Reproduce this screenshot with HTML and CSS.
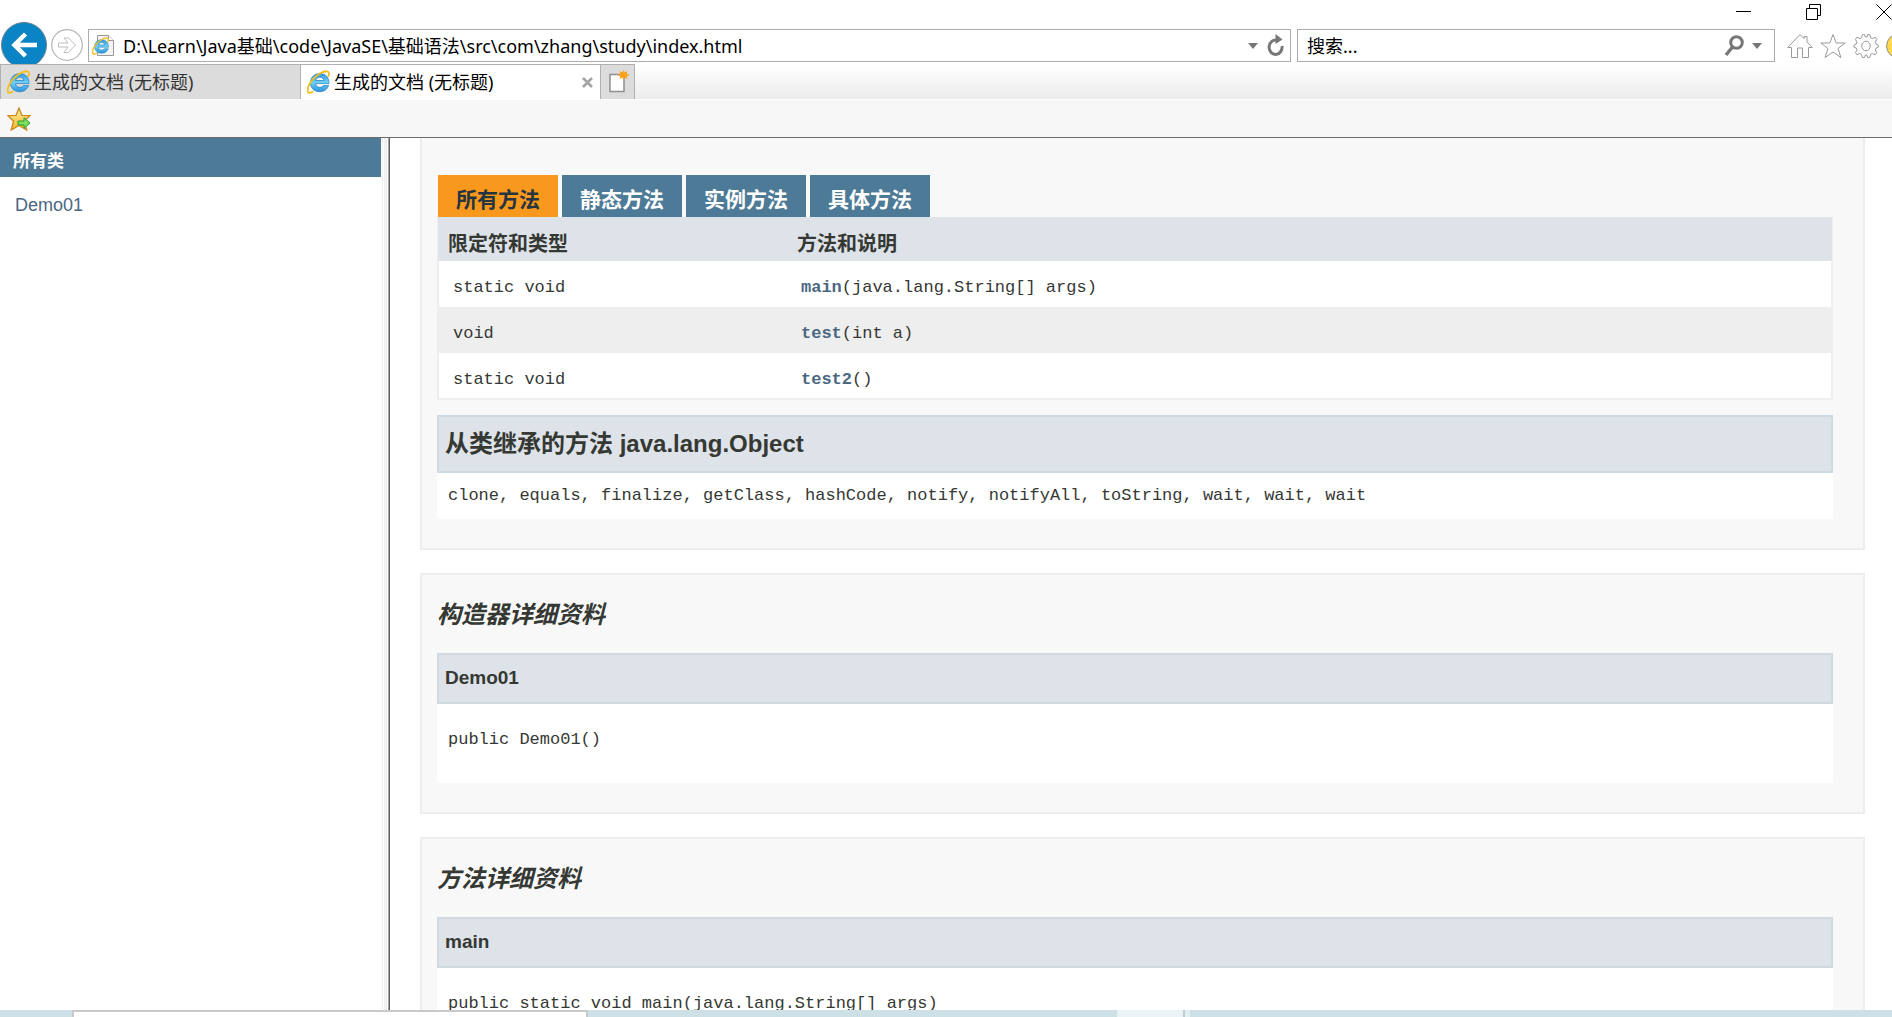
FILE: index.html
```html
<!DOCTYPE html>
<html lang="zh-CN">
<head>
<meta charset="utf-8">
<title>生成的文档 (无标题)</title>
<link rel="stylesheet" href="styles.css">
</head>
<body>
<svg class="defs" aria-hidden="true">
  <defs>
    <linearGradient id="blue" x1="0" y1="0" x2="0" y2="1"><stop offset="0" stop-color="#2f9be0"/><stop offset=".5" stop-color="#6fd0f7"/><stop offset="1" stop-color="#2a93da"/></linearGradient>
    <linearGradient id="gold" x1="0" y1="0" x2="0" y2="1"><stop offset="0" stop-color="#fff0a0"/><stop offset="1" stop-color="#f5b52a"/></linearGradient>
    <symbol id="ie" viewBox="0 0 24 24">
      <path d="M22 13.6H8.600c.2 2.300 1.800 3.700 4.200 3.700 1.700 0 2.900-.6 3.600-1.800h5.200c-1.300 3.900-4.600 6.200-8.900 6.200-5.600 0-9.300-3.700-9.300-8.900 0-5.300 3.900-9.200 9.400-9.200 5.700 0 9.400 3.900 9.200 10zM8.700 10.500h8.100c-.2-2-1.700-3.300-3.900-3.300-2.300 0-3.800 1.200-4.200 3.300z" fill="url(#blue)" stroke="#1d7dc2" stroke-width=".7"/>
      <path d="M21 7C22.500 4 22.300 1.600 20 1.300 15.500.8 8.500 5.500 4 11.500.8 16.500-.4 21.500 1.600 22.700c1 .6 2.700 0 4.700-1.400" fill="none" stroke="#f3bd1c" stroke-width="1.800"/>
    </symbol>
  </defs>
</svg>

<header class="chrome">
  <div class="window-buttons">
    <button aria-label="最小化"><svg width="16" height="16"><path d="M0 7.500h15" stroke="#000"/></svg></button>
    <button aria-label="还原"><svg width="16" height="16"><path d="M.5 4.500h11v11H.5zM3.500 4.500v-4h11v11h-3" fill="none" stroke="#000"/></svg></button>
    <button aria-label="关闭"><svg width="16" height="16"><path d="M.5.500l15 15M15.500.500l-15 15" stroke="#000"/></svg></button>
  </div>

  <div class="nav-row">
    <button class="back" aria-label="后退"><svg width="46" height="46"><circle cx="23" cy="23" r="22.500" fill="#0b84c6" stroke="#6d7f8b"/><path d="M36 23H14M24.500 12L13.500 23l11 11" fill="none" stroke="#fff" stroke-width="4.500"/></svg></button>
    <button class="forward" aria-label="前进"><svg width="32" height="32"><circle cx="16" cy="16" r="15.300" fill="#fff" stroke="#b5b5b5" stroke-width="1.200"/><path d="M7.500 14h9.500l-4-5h4.500l7 7-7 7.500H13l4-5.500H7.500z" fill="none" stroke="#bdbdbd"/></svg></button>
    <form class="address">
      <svg width="22" height="24"><path d="M5.500 1.500h11l5 5v15h-16z" fill="#f4f4f4" stroke="#9a9a9a"/><path d="M16.500 1.500v5h5" fill="#fff" stroke="#9a9a9a"/><use href="#ie" x="0" y="3" width="18" height="18"/></svg>
      <input aria-label="地址" value="D:\Learn\Java基础\code\JavaSE\基础语法\src\com\zhang\study\index.html">
      <button type="button" aria-label="显示地址列表"><svg width="10" height="6"><path d="M0 0h10L5 6z" fill="#777"/></svg></button>
      <button type="button" aria-label="刷新"><svg width="18" height="24"><path d="M10 6.200A6.500 7.200 0 1 0 15 12" fill="none" stroke="#777" stroke-width="3"/><path d="M8.500 0v10L15.500 5.500z" fill="#777"/></svg></button>
    </form>
    <form class="search">
      <input aria-label="搜索" value="搜索...">
      <button type="button" aria-label="执行搜索"><svg width="20" height="24"><circle cx="12.500" cy="8.500" r="5.800" fill="none" stroke="#777" stroke-width="3"/><path d="M8.500 13L2 21" stroke="#777" stroke-width="3.400"/></svg></button>
      <button type="button" aria-label="搜索选项"><svg width="10" height="6"><path d="M0 0h10L5 6z" fill="#777"/></svg></button>
    </form>
    <div class="tools">
      <button aria-label="主页"><svg width="26" height="26"><path d="M.8 14.500L13 1.500l4 4.200V3.500h3v5.400l5.200 5.600h-3.700v10h-6v-9.500h-5v9.500h-6v-10z" fill="none" stroke="#999"/></svg></button>
      <button aria-label="收藏夹"><svg width="26" height="26"><path d="M13 1.500l3.200 8.500h9l-7.200 5.500 2.900 9L13 19l-7.900 5.500L8 15.500.8 10h9z" fill="none" stroke="#999"/></svg></button>
      <button aria-label="工具"><svg width="26" height="26"><path d="M10.500 1.500h1l.8 2.500h1.600l.8-2.500h2l1 3.200 1.600.9 3-1.300 1.500 2.200-1.500 2.700.8 1.900 2.200 1v2l-2.200 1-.8 1.800 1.500 2.700-1.500 2.200-3-1.300-1.600.9-1 3.200h-2l-.8-2.500h-1.600l-.8 2.500h-2l-1-3.200-1.600-.9-3 1.300-1.400-2.200 1.500-2.700-.8-1.800-2.200-1v-2l2.200-1 .8-1.900-1.500-2.700 1.400-2.200 3 1.300 1.600-.9 1-3.200z" fill="none" stroke="#999"/><ellipse cx="13" cy="13" rx="4.300" ry="4.800" fill="none" stroke="#999"/></svg></button>
      <button aria-label="反馈"><svg width="26" height="26"><circle cx="13" cy="13" r="12.400" fill="#ffd84d" stroke="#8d8d8d"/></svg></button>
    </div>
  </div>

  <nav class="tab-row">
    <button class="tab"><svg width="24" height="24"><use href="#ie"/></svg><span>生成的文档 (无标题)</span></button>
    <button class="tab active"><svg width="24" height="24"><use href="#ie"/></svg><span>生成的文档 (无标题)</span><svg class="close" width="11" height="11"><path d="M1 1l9 9M10 1l-9 9" stroke="#a3a3a3" stroke-width="2.600"/></svg></button>
    <button class="new-tab" aria-label="新建标签页"><svg width="22" height="24"><path d="M2 4.500h14v17H2z" fill="#fff" stroke="#8f8f8f" stroke-width="1.500"/><path d="M15.500 0l1.200 2.400L19.500 1l-.8 2.800 3.100 1.200-3.100 1.200.8 2.800-2.800-1.400L15.500 10l-1.200-2.400L11.500 9l.8-2.800L9.200 5l3.100-1.200L11.500 1l2.800 1.400z" fill="#f9a11b"/></svg></button>
  </nav>

  <div class="fav-bar">
    <button aria-label="添加到收藏夹栏"><svg width="24" height="24"><path d="M12 1l2.800 7.300 8.200.3-6 5.700 2.800 8.700L12 18.500 4.200 23 6.500 14.300 1 8.600l8-.3z" fill="url(#gold)" stroke="#c98a1b" stroke-width="1.300"/><path d="M11 14h6v-3.300l6 5.300-6 5.300V18h-6z" fill="#7be05a" stroke="#2d9a2b"/></svg></button>
  </div>
</header>

<div class="frames">
  <aside class="class-list">
    <h1>所有类</h1>
    <ul><li><a href="#demo01">Demo01</a></li></ul>
  </aside>

  <main class="class-page">
    <section class="block summary">
      <div class="method-tabs">
        <button class="selected">所有方法</button>
        <button>静态方法</button>
        <button>实例方法</button>
        <button>具体方法</button>
      </div>
      <table class="methods">
        <thead><tr><th class="type">限定符和类型</th><th>方法和说明</th></tr></thead>
        <tbody>
          <tr><td><code>static void</code></td><td><code><a href="#main">main</a>(java.lang.String[] args)</code></td></tr>
          <tr class="alt"><td><code>void</code></td><td><code><a href="#test">test</a>(int a)</code></td></tr>
          <tr><td><code>static void</code></td><td><code><a href="#test2">test2</a>()</code></td></tr>
        </tbody>
      </table>
      <h3 class="bar large">从类继承的方法 java.lang.Object</h3>
      <div class="inherited"><code>clone, equals, finalize, getClass, hashCode, notify, notifyAll, toString, wait, wait, wait</code></div>
    </section>

    <section class="block" id="demo01">
      <h3 class="title">构造器详细资料</h3>
      <h4 class="bar">Demo01</h4>
      <pre>public Demo01()</pre>
    </section>

    <section class="block" id="main">
      <h3 class="title">方法详细资料</h3>
      <h4 class="bar">main</h4>
      <pre>public static void main(java.lang.String[] args)</pre>
    </section>
  </main>
</div>

<footer class="taskbar">
  <div class="task-search"></div>
  <div class="task-active"></div>
  <div class="task-divider"></div>
</footer>
</body>
</html>
```
FILE: styles.css
```css
* { box-sizing: border-box; }

body {
  margin: 0;
  height: 100vh;
  display: flex;
  flex-direction: column;
  overflow: hidden;
  background: #fff;
  color: #353833;
  font-family: "Liberation Sans", "Noto Sans CJK SC", sans-serif;
}

button {
  border: 0;
  padding: 0;
  background: none;
  font: inherit;
  color: inherit;
}

svg { display: block; flex: none; }
.defs { position: absolute; width: 0; height: 0; }
h1, h3, h4, ul, pre { margin: 0; }
a { color: #4a6782; text-decoration: none; }
code, pre { font: 17px/24px "Liberation Mono", monospace; }

/* Browser window */
.chrome {
  flex: none;
  color: #000;
  font-family: "Noto Sans", "Noto Sans CJK SC", sans-serif;
  border-bottom: 1px solid #6d6d6d;
}

.window-buttons {
  display: flex;
  justify-content: flex-end;
  align-items: flex-start;
  gap: 54px;
  height: 22px;
  padding-top: 4px;
}

.nav-row {
  display: flex;
  height: 42px;
  overflow: hidden;
  padding-left: 1px;
}

.back { align-self: flex-start; }
.forward { align-self: flex-start; margin: 7px 5px 0 4px; }

.address, .search {
  display: flex;
  align-items: center;
  height: 33px;
  margin-top: 7px;
  border: 1px solid #ababab;
  background: #fff;
}
.address { flex: 1; padding: 0 5px 0 3px; gap: 9px; }
.search { width: 478px; margin-left: 6px; padding: 0 12px 0 9px; gap: 8px; }
.address input, .search input {
  flex: 1;
  min-width: 0;
  height: 30px;
  border: 0;
  padding: 0;
  background: none;
  color: #000;
  outline: 0;
  font: 18px/30px "Noto Sans", "Noto Sans CJK SC", sans-serif;
}

.tools {
  display: flex;
  flex: none;
  gap: 7px;
  width: 117px;
  height: 26px;
  margin-top: 11px;
  padding-left: 12px;
  overflow: hidden;
}

.tab-row {
  display: flex;
  height: 36px;
  background: linear-gradient(#fff, #ececec);
  border-bottom: 1px solid #fff;
}
.tab {
  display: flex;
  align-items: center;
  gap: 3px;
  width: 300px;
  padding: 0 7px 0 6px;
  border: 1px solid #b0b0b0;
  border-width: 1px 0 0 1px;
  background: #dcdcdc;
  color: #333;
  font-size: 18px;
  line-height: 30px;
}
.tab.active { background: #fff; color: #000; }
.tab .close { margin-left: auto; }
.new-tab {
  width: 35px;
  padding-left: 7px;
  border: 1px solid #b0b0b0;
  border-bottom: 0;
  background: #dcdcdc;
}

.fav-bar {
  height: 37px;
  padding: 7px;
  background: #f7f7f7;
}

/* Documentation frames */
.frames { flex: 1; min-height: 0; display: flex; }

.class-list {
  flex: none;
  width: 390px;
  padding-right: 9px;
  background: linear-gradient(90deg, #fff 382px, #eee 382px 383px, #fff 383px 384px, #f0f0f0 384px 387px, #fff 387px 388px, #a0a0a0 388px 389px, #5f5f5f 389px);
}
.class-list h1 {
  padding: 12px 13px 3px;
  background: #4d7a97;
  color: #fff;
  font-size: 17px;
  line-height: 24px;
}
.class-list ul { list-style: none; padding: 16px 15px; }
.class-list li { font-size: 18px; line-height: 24px; }

.class-page {
  flex: 1;
  min-width: 0;
  overflow: hidden;
  padding: 0 27px 0 30px;
}

.block {
  margin-bottom: 23px;
  padding: 25px 30px 29px 15px;
  border: 2px solid #ededed;
  background: #f8f8f8;
}
.summary { border-top: 0; padding-top: 37px; }

.method-tabs { display: flex; gap: 4px; padding-left: 1px; }
.method-tabs button {
  width: 120px;
  padding: 10px 0 2px;
  background: #4d7a97;
  color: #fff;
  font-size: 21px;
  font-weight: bold;
  line-height: 30px;
}
.method-tabs .selected { background: #f8981d; color: #253441; }

.methods {
  width: 100%;
  table-layout: fixed;
  border-collapse: separate;
  border-spacing: 0;
  border: solid #eee;
  border-width: 0 1px 1px;
}
.methods .type { width: 349px; }
.methods th {
  padding: 12px 10px 2px;
  background: #dee3e9;
  font-size: 20px;
  line-height: 30px;
  text-align: left;
}
.methods td { padding: 15px 14px 7px; background: #fff; line-height: 24px; }
.methods td code { display: block; }
.methods td:first-child { border-left: 1px solid #eee; }
.methods td:last-child { border-right: 1px solid #eee; }
.methods tr:last-child td { padding-bottom: 6px; border-bottom: 1px solid #eee; }
.methods .alt td { background: #eee; }
.methods a { font-weight: bold; }

.bar {
  padding: 11px 6px 12px;
  border: 2px solid #d0d9e0;
  background: #dee3e9;
  font-size: 19px;
  line-height: 24px;
}
.bar.large { margin-top: 15px; padding: 12px 6px; font-size: 24px; line-height: 30px; }
.inherited { padding: 11px; background: #fff; }

.title {
  margin-bottom: 23px;
  font-size: 24px;
  line-height: 30px;
  font-style: italic;
}
pre { padding: 24px 11px 31px; background: #fff; }

/* Top edge of the desktop taskbar */
.taskbar {
  flex: none;
  display: flex;
  height: 7px;
  padding-left: 72px;
  background: #cde0e5;
}
.task-search { width: 516px; border: 2px solid #c9c9c9; border-bottom: 0; background: #fff; }
.task-active { width: 66px; margin-left: 529px; background: #eaf3f5; }
.task-divider { width: 7px; border-left: 2px solid #b9cdd3; background: #e2eef1; }
```
